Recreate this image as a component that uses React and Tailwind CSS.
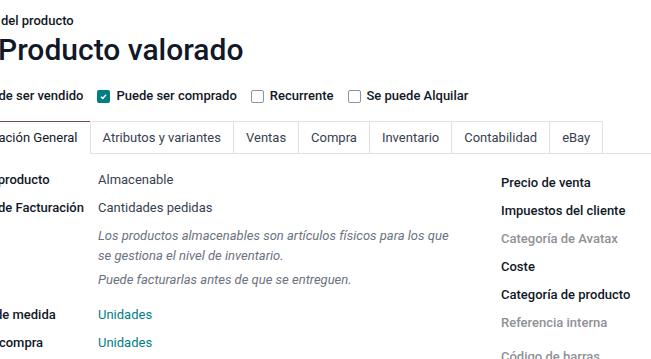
import React from 'react';

const leftRows = [
  { label: 'Tipo de producto', value: 'Almacenable' },
  { label: 'Política de Facturación', value: 'Cantidades pedidas' },
];

const uomRows = [
  { label: 'Unidad de medida', value: 'Unidades' },
  { label: 'UdM de compra', value: 'Unidades' },
];

const rightRows = [
  { label: 'Precio de venta', muted: false },
  { label: 'Impuestos del cliente', muted: false },
  { label: 'Categoría de Avatax', muted: true },
  { label: 'Coste', muted: false },
  { label: 'Categoría de producto', muted: false },
  { label: 'Referencia interna', muted: true },
];

const tabs = ['Atributos y variantes', 'Ventas', 'Compra', 'Inventario', 'Contabilidad', 'eBay'];

const Check = ({ checked, label }) => (
  <label className="flex items-center gap-[6px]">
    {checked ? (
      <span className="flex h-[13px] w-[13px] items-center justify-center rounded-[2px] bg-[#017e84]">
        <svg width="9" height="9" viewBox="0 0 10 10">
          <path d="M2.2 5.2 4.2 7.1 7.8 3" fill="none" stroke="white" strokeWidth="1.6" />
        </svg>
      </span>
    ) : (
      <span className="h-[13px] w-[13px] rounded-[2px] border border-[#8f9399] bg-white" />
    )}
    <span className="font-medium text-[#111827]">{label}</span>
  </label>
);

export default function App() {
  return (
    <div className="relative h-[359px] w-[651px] overflow-hidden bg-white text-[13px] text-[#374151]" style={{ fontFamily: 'Roboto, "Liberation Sans", sans-serif' }}>
      <div className="pt-[13px]">
        <div className="-ml-[49px] font-medium leading-[16px] text-[#111827]">Nombre del producto</div>
        <h1 className="-ml-[2px] mt-[3px] text-[30px] font-medium leading-[36px] text-[#111827]">Producto valorado</h1>

        <div className="-ml-[43px] mt-[18px] flex h-[20px] items-center gap-[14px]">
          <Check checked label="Puede ser vendido" />
          <Check checked label="Puede ser comprado" />
          <Check label="Recurrente" />
          <Check label="Se puede Alquilar" />
        </div>

        <div className="mt-[15px] flex h-[33px] w-[704px] -ml-[53px] border-b border-[#dee2e6]">
          <div className="-mb-px flex items-center border-x border-t border-[#dee2e6] border-t-[#714b67] bg-white px-[12px] text-[#111827]">
            Información General
          </div>
          {tabs.map((t) => (
            <div key={t} className="-mb-px -ml-px flex items-center border border-[#dee2e6] px-[12px] first:ml-0">
              {t}
            </div>
          ))}
        </div>

        <div className="flex">
          <div className="w-[501px] pt-[12px]">
            {leftRows.map((r) => (
              <div key={r.label} className="-ml-[49px] flex h-[28px] items-center">
                <div className="w-[147px] font-medium text-[#111827]">{r.label}</div>
                <div>{r.value}</div>
              </div>
            ))}
            <div className="ml-[98px] mt-[4px] italic text-[#6b7280]">
              <div className="leading-[20px]">
                Los productos almacenables son artículos físicos para los que
                <br />
                se gestiona el nivel de inventario.
              </div>
              <div className="mt-[4px] leading-[20px]">Puede facturarlas antes de que se entreguen.</div>
            </div>
            <div className="mt-[11px]">
              {uomRows.map((r) => (
                <div key={r.label} className="-ml-[49px] flex h-[28px] items-center">
                  <div className="w-[147px] font-medium text-[#111827]">{r.label}</div>
                  <div className="text-[#017e84]">{r.value}</div>
                </div>
              ))}
            </div>
          </div>
          <div className="flex-1 pt-[15px]">
            {rightRows.map((r) => (
              <div
                key={r.label}
                className={`flex h-[28px] items-center font-medium ${r.muted ? 'text-[#8f9197]' : 'text-[#111827]'}`}
              >
                {r.label}
              </div>
            ))}
            <div className="mt-[6px] flex h-[28px] items-center font-medium text-[#8f9197]">Código de barras</div>
          </div>
        </div>
      </div>
    </div>
  );
}
